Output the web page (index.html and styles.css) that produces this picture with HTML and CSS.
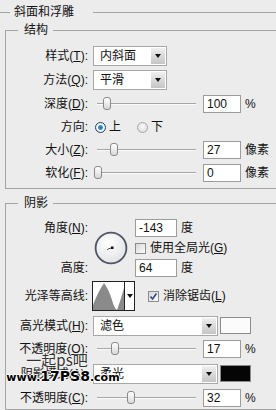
FILE: index.html
```html
<!DOCTYPE html>
<html lang="zh-cn">
<head>
    <meta charset="UTF-8">
    <title>斜面和浮雕</title>
    <link rel="stylesheet" href="styles.css">
</head>
<body>
    <fieldset class="effect">
        <legend>斜面和浮雕</legend>

        <fieldset class="group group-structure">
            <legend>结构</legend>
            <div class="row row-select">
                <span class="label">样式(<u>T</u>):</span>
                <div class="select"><span class="select-text">内斜面</span><span class="select-btn"></span></div>
            </div>
            <div class="row row-select">
                <span class="label">方法(<u>Q</u>):</span>
                <div class="select"><span class="select-text">平滑</span><span class="select-btn"></span></div>
            </div>
            <div class="row">
                <span class="label">深度(<u>D</u>):</span>
                <div class="slider"><span class="thumb" style="left: 9px"></span></div>
                <span class="num">100</span>
                <span class="unit">%</span>
            </div>
            <div class="row row-radio">
                <span class="label">方向:</span>
                <span class="radio radio-first checked"></span><span class="radio-text">上</span>
                <span class="radio"></span><span class="radio-text">下</span>
            </div>
            <div class="row row-thin">
                <span class="label">大小(<u>Z</u>):</span>
                <div class="slider"><span class="thumb" style="left: 16px"></span></div>
                <span class="num">27</span>
                <span class="unit">像素</span>
            </div>
            <div class="row row-thin">
                <span class="label">软化(<u>F</u>):</span>
                <div class="slider"><span class="thumb" style="left: 0px"></span></div>
                <span class="num">0</span>
                <span class="unit">像素</span>
            </div>
        </fieldset>

        <fieldset class="group group-shadow">
            <legend>阴影</legend>
            <div class="angle">
                <span class="label angle-label">角度(<u>N</u>):</span>
                <div class="dial">
                    <svg width="34" height="34" viewBox="0 0 34 34">
                        <defs>
                            <radialGradient id="dialFill" cx="40%" cy="35%" r="70%">
                                <stop offset="0" stop-color="#ffffff"/>
                                <stop offset="1" stop-color="#e2e2e6"/>
                            </radialGradient>
                        </defs>
                        <circle cx="17" cy="17" r="15.4" fill="url(#dialFill)" stroke="#4f5566" stroke-width="1.8"/>
                        <line x1="14" y1="18" x2="17" y2="17" stroke="#444" stroke-width="1"/>
                        <rect x="17" y="15.5" width="2.5" height="2.5" fill="#111"/>
                        <rect x="13" y="18" width="1" height="1" fill="#666"/>
                    </svg>
                </div>
                <div class="angle-value">
                    <span class="num">-143</span>
                    <span class="unit">度</span>
                </div>
                <div class="angle-check">
                    <span class="check"></span>
                    <span class="check-text">使用全局光(<u>G</u>)</span>
                </div>
                <span class="label height-label">高度:</span>
                <div class="height-value">
                    <span class="num">64</span>
                    <span class="unit">度</span>
                </div>
            </div>
            <div class="row row-contour">
                <span class="label">光泽等高线:</span>
                <div class="contour">
                    <svg width="31" height="28" viewBox="0 0 31 28">
                        <path d="M0 28 L0 23 Q5 10 11 1 Q16 8 19 18 Q21 26 24 28 Q27 20 31 6 L31 28 Z" fill="#8a8a8a"/>
                    </svg>
                    <span class="contour-btn"></span>
                </div>
                <span class="check checked">
                    <svg width="9" height="9" viewBox="0 0 9 9">
                        <path d="M1.5 4.5 L3.5 7 L7.5 1.5" fill="none" stroke="#2b4a8c" stroke-width="1.6"/>
                    </svg>
                </span>
                <span class="check-text">消除锯齿(<u>L</u>)</span>
            </div>
            <div class="row row-mode">
                <span class="label">高光模式(<u>H</u>):</span>
                <div class="select select-wide"><span class="select-text">滤色</span><span class="select-btn"></span></div>
                <span class="swatch swatch-white"></span>
            </div>
            <div class="row">
                <span class="label">不透明度(<u>O</u>):</span>
                <div class="slider"><span class="thumb" style="left: 17px"></span></div>
                <span class="num">17</span>
                <span class="unit">%</span>
            </div>
            <div class="row row-mode row-shadow-mode">
                <span class="label">阴影模式(<u>A</u>):</span>
                <div class="select select-wide"><span class="select-text">柔光</span><span class="select-btn"></span></div>
                <span class="swatch swatch-black"></span>
            </div>
            <div class="row row-thin">
                <span class="label">不透明度(<u>C</u>):</span>
                <div class="slider"><span class="thumb" style="left: 33px"></span></div>
                <span class="num">32</span>
                <span class="unit">%</span>
            </div>
        </fieldset>
    </fieldset>

    <div class="watermark">
        <div class="wm-top">一起ps吧</div>
        <div class="wm-bottom"><span class="wm-small">www.</span>17PS8<span class="wm-small">.com</span></div>
    </div>
</body>
</html>
```

FILE: styles.css
```css
body {
    margin: 0;
    width: 276px;
    height: 410px;
    overflow: hidden;
    position: relative;
    background-color: #ececec;
    font-family: "Liberation Sans", "Noto Sans CJK SC", sans-serif;
    font-size: 12px;
    line-height: 14px;
    color: #111;
}
u {
    text-decoration: underline;
    text-underline-offset: 1px;
}
.effect {
    margin: 5px 0 0 0;
    padding: 0;
    border: none;
    border-top: 1px solid #a4a4a4;
    min-inline-size: 0;
}
.effect > legend {
    margin-left: 10px;
    padding: 0 19px 0 4px;
    line-height: 14px;
}
.group {
    margin: 4px 0 0 5px;
    padding: 7px 0 4px 0;
    border: 1px solid #a4a4a4;
    border-right: none;
    min-inline-size: 0;
}
.group > legend {
    margin-left: 12px;
    padding: 0 5px 0 6px;
    line-height: 14px;
}
.group-shadow {
    margin-top: 7px;
    padding: 8px 0 0 0;
}
.row {
    display: flex;
    align-items: center;
    height: 24px;
}
.row-thin {
    height: 23px;
}
.row-radio {
    height: 22px;
}
.label {
    width: 82px;
    flex: none;
    text-align: right;
    white-space: nowrap;
}
.select {
    display: flex;
    width: 74px;
    height: 20px;
    margin-left: 5px;
    box-sizing: border-box;
    border: 1px solid #a8a8a8;
    background-color: #fff;
}
.select-wide {
    width: 125px;
}
.select-text {
    flex: 1;
    padding-left: 6px;
    line-height: 18px;
}
.select-btn {
    position: relative;
    width: 14px;
    margin: 1px;
    background: linear-gradient(#f0f0f0, #c4c4c4);
}
.select-btn::after,
.contour-btn::after {
    content: "";
    position: absolute;
    left: 50%;
    top: 50%;
    margin: -2px 0 0 -3px;
    border-left: 3px solid transparent;
    border-right: 3px solid transparent;
    border-top: 4px solid #111;
}
.slider {
    position: relative;
    width: 103px;
    height: 14px;
    margin-left: 6px;
    flex: none;
}
.slider::before {
    content: "";
    position: absolute;
    left: 3px;
    right: 1px;
    top: 6px;
    height: 1px;
    background-color: #a6a6a6;
    box-shadow: 0 1px 0 #fbfbfb;
}
.thumb {
    position: absolute;
    top: 0;
    width: 6px;
    height: 11px;
    border: 1px solid #8a8a8a;
    border-radius: 3px;
    background: linear-gradient(#ffffff, #d8d8d8);
}
.num {
    display: block;
    width: 38px;
    height: 18px;
    margin-left: 6px;
    box-sizing: border-box;
    border: 1px solid #9c9c9c;
    background-color: #fff;
    padding-left: 3px;
    line-height: 16px;
    flex: none;
}
.unit {
    margin-left: 4px;
}
.radio {
    width: 11px;
    height: 11px;
    box-sizing: border-box;
    border: 1px solid #a7a7a7;
    border-radius: 50%;
    background: radial-gradient(circle at 50% 40%, #fafafa, #d5d5d5);
    flex: none;
}
.radio-first {
    margin-left: 7px;
}
.radio.checked {
    border-color: #1f3f66;
    background: radial-gradient(circle, #2a6fae 0, #3c8fd4 2px, #ffffff 3px, #dfe8f0 5px);
}
.radio-text {
    margin: 0 16px 0 3px;
}
.angle {
    display: grid;
    grid-template-columns: 82px 36px auto;
    grid-template-rows: 20px 20px 20px;
    column-gap: 5px;
    align-items: center;
}
.angle-label {
    grid-row: 1;
    grid-column: 1;
}
.height-label {
    grid-row: 3;
    grid-column: 1;
}
.dial {
    grid-row: 1 / 4;
    grid-column: 2;
    display: flex;
    justify-content: center;
    align-items: center;
}
.dial svg,
.contour svg {
    display: block;
}
.angle-value,
.height-value,
.angle-check {
    grid-column: 3;
    display: flex;
    align-items: center;
}
.angle-value .num,
.height-value .num {
    margin-left: 1px;
    width: 42px;
}
.angle-value {
    grid-row: 1;
}
.angle-check {
    grid-row: 2;
}
.height-value {
    grid-row: 3;
}
.check {
    display: flex;
    align-items: center;
    justify-content: center;
    width: 11px;
    height: 11px;
    box-sizing: border-box;
    border: 1px solid #8c8c8c;
    background: linear-gradient(135deg, #d9d9d9, #fbfbfb);
    flex: none;
}
.angle-check .check {
    margin-left: 1px;
}
.check-text {
    margin-left: 4px;
}
.row-contour {
    height: 36px;
}
.row-contour .check {
    margin-left: 13px;
}
.contour {
    display: flex;
    width: 43px;
    height: 30px;
    margin-left: 4px;
    box-sizing: border-box;
    border: 1px solid #222;
    background-color: #fff;
    flex: none;
}
.contour svg {
    border-right: 1px solid #222;
}
.contour-btn {
    position: relative;
    flex: 1;
}
.row-mode {
    height: 23px;
}
.row-shadow-mode {
    height: 25px;
}
.swatch {
    width: 31px;
    height: 17px;
    margin-left: 2px;
    box-sizing: border-box;
    border: 1px solid #8c8c8c;
}
.swatch-white {
    background-color: #fbfbfb;
}
.swatch-black {
    background-color: #050505;
}
/* watermark lies over the label of the shadow mode row */
.watermark {
    position: absolute;
    left: 4px;
    top: 351px;
    width: 118px;
    text-align: center;
}
.wm-top {
    margin-left: -12px;
    font-family: "Noto Sans CJK SC", sans-serif;
    font-size: 15px;
    line-height: 18px;
    color: #333;
    text-shadow: 0 0 2px #fff, 0 0 1px #fff;
}
.wm-bottom {
    font-family: "DejaVu Sans", sans-serif;
    font-weight: bold;
    font-size: 14px;
    line-height: 15px;
    color: #000;
    text-shadow: 1px 0 0 #fff, -1px 0 0 #fff, 0 1px 0 #fff, 0 -1px 0 #fff;
}
.wm-small {
    font-size: 11px;
}
```
